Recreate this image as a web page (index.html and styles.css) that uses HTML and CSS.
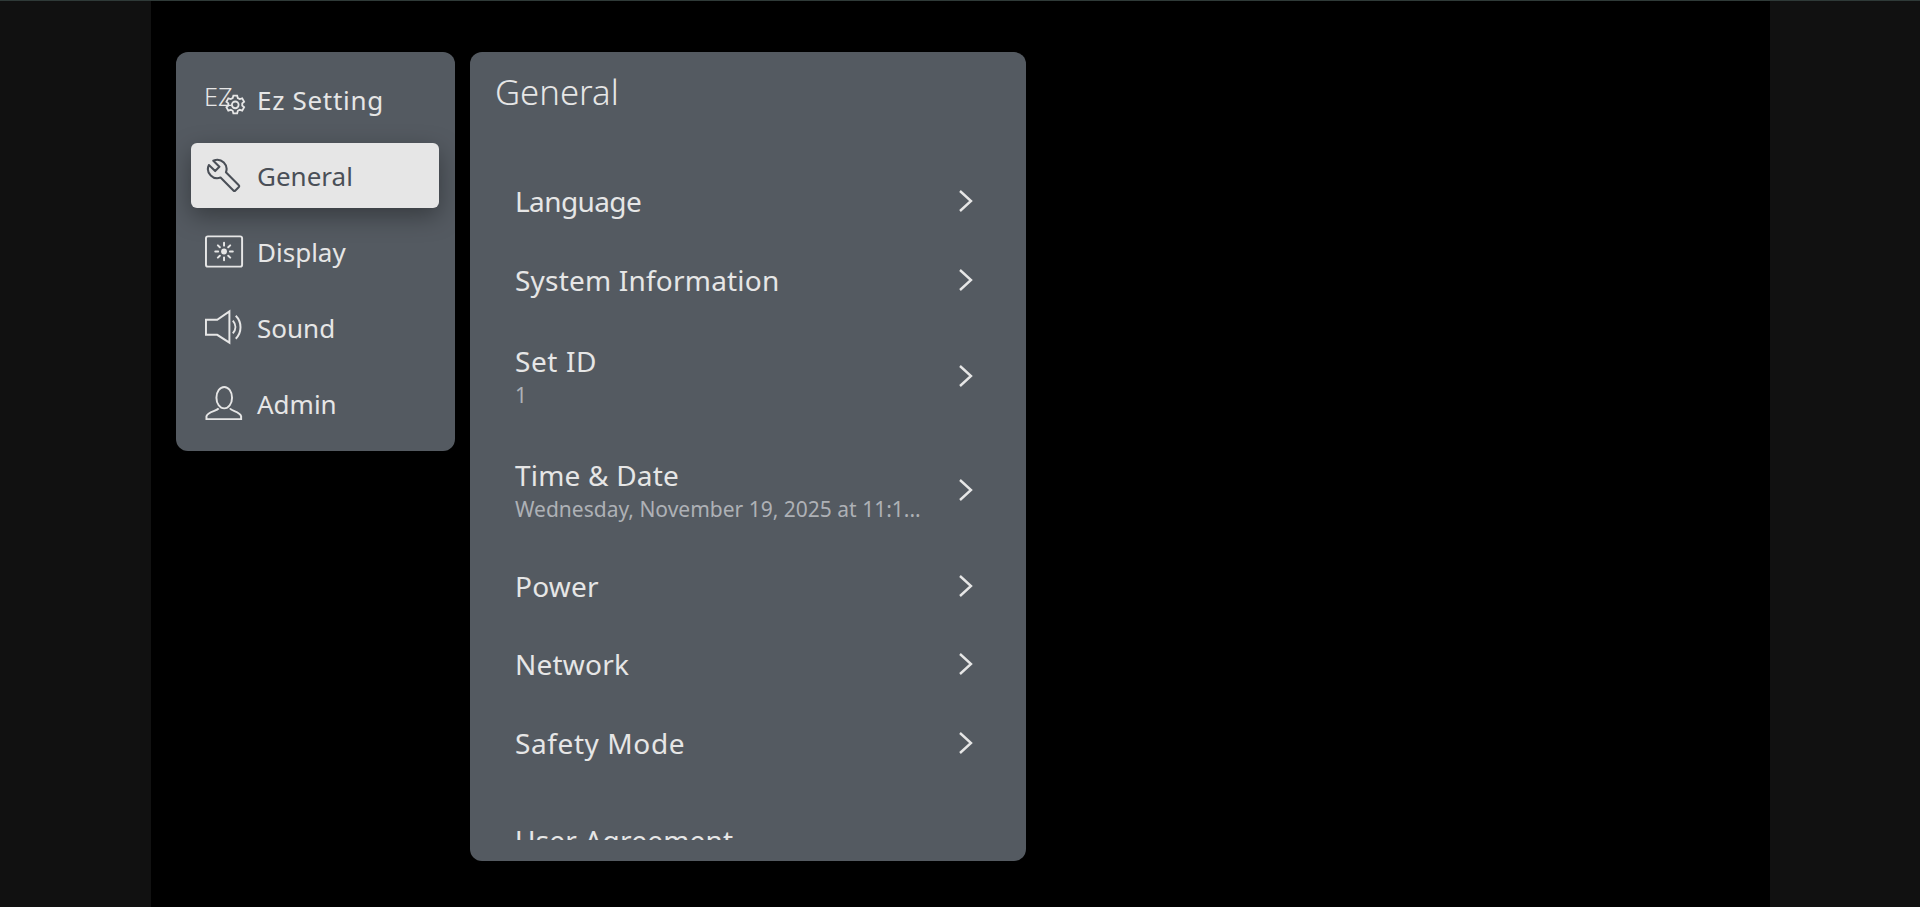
FILE: index.html
```html
<!DOCTYPE html>
<html lang="en">
<head>
<meta charset="utf-8">
<title>General</title>
<link rel="stylesheet" href="styles.css">
</head>
<body>
<div class="topline"></div>
<div class="stage">
  <aside class="side"></aside>
  <main class="center">
    <nav class="panel menu">
      <div class="menu-item">
        <svg class="menu-icon" viewBox="0 0 42 42" fill="none" stroke="currentColor" stroke-width="1.600">
          <text class="ez-mark" x="-1" y="27.500">EZ</text>
          <g transform="translate(31 26.500) scale(1.150) translate(-29 -27)">
            <circle cx="29" cy="27" r="3"/>
            <path d="M27.300 18.800h3.400l.6 2.200 1.700.9 2.200-.7 1.700 3-1.700 1.500v1.900l1.700 1.500-1.700 3-2.200-.7-1.700.9-.6 2.200h-3.400l-.6-2.200-1.700-.9-2.200.7-1.700-3 1.700-1.500v-1.900l-1.700-1.500 1.700-3 2.200.7 1.700-.9z"/>
          </g>
        </svg>
        <span class="wide">Ez Setting</span>
      </div>
      <div class="menu-item active">
        <svg class="menu-icon" viewBox="0 0 42 42" fill="none" stroke="currentColor" stroke-linejoin="round">
          <path transform="translate(1.700 3.400) scale(1.450)" stroke-width="1.450" d="M22.700 19l-9.100-9.100c.9-2.300.4-5-1.500-6.900-2-2-5-2.400-7.400-1.300L9 6 6 9 1.600 4.700C.4 7.100.9 10.100 2.900 12.100c1.900 1.900 4.600 2.400 6.900 1.500l9.100 9.100c.4.4 1 .4 1.400 0l2.300-2.300c.5-.4.5-1.100.1-1.400z"/>
        </svg>
        <span>General</span>
      </div>
      <div class="menu-item">
        <svg class="menu-icon" viewBox="0 0 42 42" fill="none" stroke="currentColor" stroke-width="2" stroke-linecap="round">
          <rect x="1" y="5.500" width="37" height="31" rx="2"/>
          <circle cx="19.500" cy="21" r="3" fill="currentColor" stroke="none"/>
          <path d="M19.500 12v3M19.500 27v3M10.500 21h3M25.500 21h3M13.200 14.700l2 2M23.800 25.300l2 2M25.800 14.700l-2 2M15.200 25.300l-2 2"/>
        </svg>
        <span>Display</span>
      </div>
      <div class="menu-item">
        <svg class="menu-icon" viewBox="0 0 42 42" fill="none" stroke="currentColor" stroke-width="2">
          <path d="M1 13h11.500L25 4.500v32L12.500 28.500H1z"/>
          <path d="M28.500 14c3.500 4 3.500 9 0 13M31.500 9c6.500 6.500 6.500 17 0 23.500"/>
        </svg>
        <span>Sound</span>
      </div>
      <div class="menu-item">
        <svg class="menu-icon" viewBox="0 0 42 42" fill="none" stroke="currentColor" stroke-width="2">
          <ellipse cx="19.700" cy="15" rx="8" ry="11"/>
          <path d="M14 26C12 29 3 29 1.500 34v3H37v-3C35.500 29 27 29 25.500 26"/>
        </svg>
        <span>Admin</span>
      </div>
    </nav>
    <section class="panel detail">
      <h1 class="title">General</h1>
      <div class="list">
        <div class="row"><div class="row-text"><div class="row-name narrow">Language</div></div><svg class="chev" viewBox="0 0 16 24"><path d="M2 2l11 10L2 22"/></svg></div>
        <div class="row"><div class="row-text"><div class="row-name">System Information</div></div><svg class="chev" viewBox="0 0 16 24"><path d="M2 2l11 10L2 22"/></svg></div>
        <div class="row tall"><div class="row-text"><div class="row-name wide">Set ID</div><div class="row-sub">1</div></div><svg class="chev" viewBox="0 0 16 24"><path d="M2 2l11 10L2 22"/></svg></div>
        <div class="row tall"><div class="row-text"><div class="row-name">Time &amp; Date</div><div class="row-sub">Wednesday, November 19, 2025 at 11:1...</div></div><svg class="chev" viewBox="0 0 16 24"><path d="M2 2l11 10L2 22"/></svg></div>
        <div class="row"><div class="row-text"><div class="row-name">Power</div></div><svg class="chev" viewBox="0 0 16 24"><path d="M2 2l11 10L2 22"/></svg></div>
        <div class="row"><div class="row-text"><div class="row-name">Network</div></div><svg class="chev" viewBox="0 0 16 24"><path d="M2 2l11 10L2 22"/></svg></div>
        <div class="row"><div class="row-text"><div class="row-name wide">Safety Mode</div></div><svg class="chev" viewBox="0 0 16 24"><path d="M2 2l11 10L2 22"/></svg></div>
        <div class="row spaced"><div class="row-text"><div class="row-name">User Agreement</div></div></div>
      </div>
    </section>
  </main>
  <aside class="side side-right"></aside>
</div>
</body>
</html>
```
FILE: styles.css
```css
* { box-sizing: border-box; }
html, body { margin: 0; height: 100%; background: #000; overflow: hidden; }
body { font-family: "Noto Sans", sans-serif; color: #e6e6e6; display: flex; flex-direction: column; }
.topline { height: 1px; background: #2f3a38; flex: none; }
.stage { flex: 1; display: flex; min-height: 0; }
.side { width: 151px; flex: none; background: #111; }
.side-right { width: 150px; }
.center { flex: 1; background: #000; display: flex; align-items: flex-start; gap: 15px; padding: 51px 0 0 25px; }
.panel { background: #545a61; border-radius: 12px; }
.menu { width: 279px; padding: 15px 16px 15px 15px; display: flex; flex-direction: column; gap: 11px; }
.menu-item { height: 65px; display: flex; align-items: center; gap: 11px; padding-left: 14px; font-size: 26px; border-radius: 6px; color: #e6e6e6; }
.menu-item.active { background: #e6e6e6; color: #4a4f57; box-shadow: 0 8px 24px rgba(0,0,0,.35); }
.menu-icon { width: 41px; height: 41px; flex: none; }
.ez-mark { font-size: 26px; font-weight: 300; fill: currentColor; stroke: none; }
.detail { width: 556px; height: 809px; padding: 0 0 21px; display: flex; flex-direction: column; }
.title { margin: 0; padding: 17px 0 0 25px; height: 110px; font-size: 34.700px; font-weight: 300; line-height: 46px; color: #e6e6e6; flex: none; }
.list { flex: 1; overflow: hidden; min-height: 0; }
.row { height: 78.400px; display: flex; align-items: center; justify-content: space-between; padding: 0 52px 0 45px; }
.row.tall { height: 114px; }
.row.spaced { margin-top: 19px; }
.row-name { font-size: 28px; line-height: 38px; color: #e6e6e6; letter-spacing: .2px; }
.row-name.narrow { letter-spacing: -.6px; }
.row-name.wide { letter-spacing: .6px; }
.menu-item .wide { letter-spacing: .7px; }
.row-sub { font-size: 21px; line-height: 28px; margin-top: 1px; color: #aeb1b6; white-space: nowrap; }
.chev { width: 16px; height: 24px; fill: none; stroke: #e6e6e6; stroke-width: 2.400; flex: none; }
```
